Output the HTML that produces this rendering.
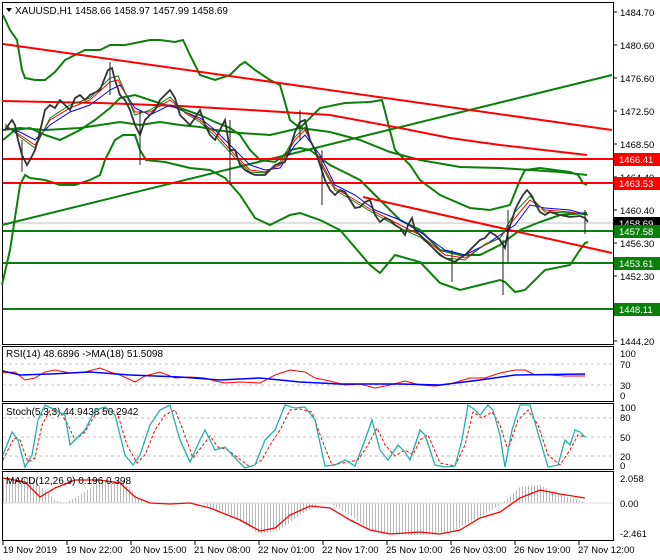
<!DOCTYPE html>
<html><head><meta charset="utf-8"><style>
html,body{margin:0;padding:0;background:#fff;}
svg{display:block;font-family:"Liberation Sans",sans-serif;}
</style></head><body>
<svg width="660" height="560" viewBox="0 0 660 560" xmlns="http://www.w3.org/2000/svg">
<defs>
<pattern id="hist" width="3" height="10" patternUnits="userSpaceOnUse"><rect x="0" y="0" width="1" height="10" fill="#b8b8b8"/></pattern>
</defs>
<rect width="660" height="560" fill="#fff"/>
<g fill="none" stroke="#000" stroke-width="1">
<rect x="2.5" y="2.5" width="611" height="342"/>
<rect x="2.5" y="346.5" width="611" height="55"/>
<rect x="2.5" y="403.5" width="611" height="66"/>
<rect x="2.5" y="471.5" width="611" height="69"/>
</g>
<g stroke="#000">
<line x1="613" y1="12" x2="617" y2="12"/><line x1="613" y1="45" x2="617" y2="45"/><line x1="613" y1="78" x2="617" y2="78"/><line x1="613" y1="111" x2="617" y2="111"/><line x1="613" y1="144" x2="617" y2="144"/><line x1="613" y1="177" x2="617" y2="177"/><line x1="613" y1="210" x2="617" y2="210"/><line x1="613" y1="243" x2="617" y2="243"/><line x1="613" y1="276" x2="617" y2="276"/><line x1="613" y1="341" x2="617" y2="341"/>
</g>
<g font-size="9.5" fill="#000">
<text x="620" y="16">1484.70</text><text x="620" y="49">1480.60</text><text x="620" y="82">1476.60</text><text x="620" y="115">1472.50</text><text x="620" y="148">1468.50</text><text x="620" y="181">1464.40</text><text x="620" y="214">1460.40</text><text x="620" y="247">1456.30</text><text x="620" y="280">1452.30</text><text x="620" y="345">1444.20</text>
</g>
<path d="M6 8 L12 8 L9 12 Z" fill="#000"/>
<text x="15" y="14" font-size="10">XAUUSD,H1  1458.66 1458.97 1457.99 1458.69</text>

<line x1="3" y1="223" x2="613" y2="223" stroke="#c0c0c0"/>

<g fill="none" stroke="#0a800a" stroke-width="2">
<polyline points="3,15 10,30 17,40 22,70 25,78 35,80 45,80 55,72 65,60 75,55 85,50 100,50 110,45 125,45 140,42 150,40 160,40 175,42 183,40 190,55 200,75 215,80 230,75 240,65 245,62 255,70 270,80 280,85 290,120 300,128 320,108 345,103 370,102 382,100 395,150 410,165 420,180 440,195 470,208 490,210 510,205 520,180 525,170 540,168 570,172 578,175 583,183 587,185"/>
<polyline points="3,130 20,128 45,130 80,128 120,122 140,125 160,122 180,125 200,127 215,130 240,133 270,135 300,128 330,132 360,140 390,152 420,160 460,167 500,168 530,170 560,172 587,175"/>
<polyline points="3,140 15,130 30,128 45,135 60,140 80,130 95,120 110,108 120,98 135,95 150,100 165,105 180,108 200,115 215,122 230,128 240,135 250,150 260,160 275,162 290,150 300,148 310,150 330,165 360,180 380,200 400,220 420,230 440,250 460,255 480,255 500,245 520,230 540,222 560,215 587,213"/>
<polyline points="2,285 10,250 20,185 25,175 30,178 45,180 60,185 75,185 90,180 100,175 105,160 115,140 123,135 135,135 140,150 146,160 165,162 190,168 210,170 225,178 240,195 255,218 270,225 290,215 300,213 320,220 340,230 370,265 380,273 395,255 420,262 440,283 460,290 480,285 500,280 505,282 515,292 525,290 545,270 570,265 580,250 585,243 588,242"/>
<polyline points="2,225 612,75"/>
<line x1="3" y1="231" x2="613" y2="231"/>
<line x1="3" y1="263" x2="613" y2="263"/>
<line x1="3" y1="309" x2="613" y2="309"/>
</g>
<g fill="none" stroke="#ff0000" stroke-width="2">
<line x1="3" y1="44" x2="612" y2="130"/>
<polyline points="2,101 100,103 180,106 250,110 330,115 400,128 450,138 500,145 587,155"/>
<line x1="363" y1="197" x2="612" y2="253"/>
<line x1="3" y1="159" x2="613" y2="159"/>
<line x1="3" y1="183" x2="613" y2="183"/>
</g>
<g fill="none" stroke-width="1">
<polyline stroke="#0000ff" points="5,128 20,132 35,140 50,125 70,112 90,105 110,90 120,85 135,108 150,115 170,105 185,112 200,118 215,130 235,150 250,165 265,170 280,168 295,145 305,135 320,155 335,185 355,195 375,210 400,220 420,232 445,250 465,255 485,245 500,235 515,225 530,205 545,208 570,210 588,215"/>
<polyline stroke="#ff0000" points="5,126 20,135 35,145 50,120 70,108 90,100 110,82 118,80 135,112 150,112 170,100 185,112 200,120 215,133 235,155 250,170 265,172 280,165 295,140 305,130 320,160 335,188 355,200 375,212 400,225 420,235 445,255 465,258 485,245 500,238 515,218 530,200 545,210 570,212 588,215"/>
<polyline stroke="#0a800a" points="5,124 20,137 35,148 50,118 70,105 90,98 110,78 118,76 135,115 150,110 170,97 185,113 200,122 215,136 235,158 250,172 265,173 280,162 295,137 305,127 320,163 335,190 355,202 375,214 400,228 420,237 445,258 465,260 485,244 500,238 515,212 530,196 545,212 570,213 588,215"/>
</g>
<polyline fill="none" stroke="#333" stroke-width="1.8" points="5,130 12,120 15,125 18,140 22,155 27,165 30,160 35,150 38,140 45,110 50,105 55,108 60,100 65,105 70,110 75,98 80,95 85,100 90,95 100,90 108,70 112,68 115,80 120,95 125,100 130,110 135,125 140,135 145,120 150,115 155,110 160,100 165,95 170,90 175,98 180,115 185,120 190,125 195,118 200,110 205,125 210,135 215,140 220,130 225,120 230,150 235,150 240,165 245,170 250,173 255,175 265,175 270,170 275,165 285,162 290,148 295,132 300,122 305,120 310,140 315,150 320,165 325,180 330,190 335,195 340,190 345,192 350,200 355,208 360,207 365,202 370,200 375,215 380,222 385,218 390,220 395,225 400,228 405,235 408,225 412,218 415,230 420,235 425,240 430,245 435,250 440,255 445,258 450,260 455,262 460,258 465,255 470,250 475,245 480,240 485,238 490,232 495,235 500,240 505,248 508,232 512,220 515,210 520,200 523,195 527,190 532,196 536,205 540,212 545,215 550,212 560,215 570,217 580,216 585,218 588,222"/>
<g stroke="#222" stroke-width="1">
<line x1="110" y1="62" x2="110" y2="95"/><line x1="22" y1="140" x2="22" y2="172"/><line x1="140" y1="110" x2="140" y2="165"/><line x1="230" y1="120" x2="230" y2="185"/><line x1="300" y1="110" x2="300" y2="140"/><line x1="322" y1="150" x2="322" y2="205"/><line x1="452" y1="250" x2="452" y2="282"/><line x1="503" y1="240" x2="503" y2="295"/><line x1="508" y1="210" x2="508" y2="262"/><line x1="585" y1="210" x2="585" y2="234"/>
</g>

<rect x="614" y="153" width="46" height="13" fill="#ff0000"/><text x="619" y="163" font-size="9.5" fill="#fff">1466.41</text>
<rect x="614" y="177" width="46" height="13" fill="#ff0000"/><text x="619" y="187" font-size="9.5" fill="#fff">1463.53</text>
<rect x="614" y="217" width="46" height="12" fill="#000"/><text x="619" y="227" font-size="9.5" fill="#fff">1458.69</text>
<rect x="614" y="225" width="46" height="13" fill="#0a800a"/><text x="619" y="235" font-size="9.5" fill="#fff">1457.58</text>
<rect x="614" y="257" width="46" height="13" fill="#0a800a"/><text x="619" y="267" font-size="9.5" fill="#fff">1453.61</text>
<rect x="614" y="303" width="46" height="13" fill="#0a800a"/><text x="619" y="313" font-size="9.5" fill="#fff">1448.11</text>

<g stroke="#c0c0c0" stroke-dasharray="3,3"><line x1="3" y1="364" x2="613" y2="364"/><line x1="3" y1="385" x2="613" y2="385"/></g>
<text x="6" y="357" font-size="10">RSI(14) 48.6896  -&gt;MA(18) 51.5098</text>
<g font-size="9.5"><text x="620" y="357">100</text><text x="620" y="368">70</text><text x="620" y="389">30</text><text x="620" y="399">0</text></g>
<polyline fill="none" stroke="#ff0000" points="3,373 15,372 25,380 35,378 45,372 55,370 70,373 85,372 100,368 110,372 120,375 135,382 145,376 160,372 175,378 190,377 205,378 215,381 225,383 240,382 260,383 275,375 290,370 305,372 315,378 330,381 345,385 360,384 375,388 390,385 405,381 420,385 435,386 450,384 470,378 485,378 500,373 515,370 525,370 535,375 550,375 565,376 585,376"/>
<polyline fill="none" stroke="#0000ff" stroke-width="1.5" points="3,371 20,375 50,374 90,372 130,375 180,377 220,380 260,378 300,382 340,384 400,384 440,385 480,380 515,375 585,374"/>

<g stroke="#c0c0c0" stroke-dasharray="3,3"><line x1="3" y1="418" x2="613" y2="418"/><line x1="3" y1="437" x2="613" y2="437"/><line x1="3" y1="456" x2="613" y2="456"/></g>
<text x="6" y="415" font-size="10">Stoch(5,3,3) 44.9438 50.2942</text>
<g font-size="9.5"><text x="620" y="411">100</text><text x="620" y="421">80</text><text x="620" y="441">50</text><text x="620" y="460">20</text><text x="620" y="469">0</text></g>
<polyline fill="none" stroke="#ff0000" stroke-dasharray="3,2" points="3,460 14,438 20,440 28,462 35,458 42,425 50,410 60,412 68,425 75,440 85,432 95,415 107,410 117,412 127,445 137,463 145,455 155,430 165,415 175,410 183,430 193,458 203,445 210,436 218,447 228,450 238,458 250,467 262,460 270,445 280,430 290,410 300,409 312,412 322,440 332,465 348,462 358,460 368,445 377,428 385,445 395,456 405,450 413,455 420,440 428,435 440,463 455,466 465,445 473,412 482,418 492,412 500,425 508,450 518,420 528,410 538,425 548,455 560,465 570,450 578,435 586,437"/>
<polyline fill="none" stroke="#20b2aa" stroke-width="1.3" points="3,455 12,432 18,440 25,467 32,455 38,420 45,405 55,410 65,415 70,445 75,440 85,430 95,410 105,407 115,415 125,455 133,465 140,455 150,425 160,410 170,405 180,440 190,462 200,440 205,430 215,450 225,447 235,458 245,468 255,465 265,440 275,430 285,405 295,408 305,407 315,420 325,466 335,465 345,460 355,466 365,440 372,420 380,450 388,460 398,445 405,452 410,460 415,445 420,430 425,435 435,465 445,467 455,466 462,440 468,405 475,410 480,415 488,405 493,410 500,435 505,467 512,430 520,405 530,405 540,440 548,467 558,465 565,440 570,445 575,430 580,432 585,437"/>

<polygon fill="url(#hist)" points="3,503 3,478 30,478 45,490 55,500 65,503 80,495 100,482 125,480 135,495 145,503 200,503 230,515 260,534 280,530 300,515 320,503 330,503 350,515 370,530 400,535 440,535 460,528 480,517 500,505 520,487 540,485 560,495 585,502 585,503"/>
<line x1="3" y1="503" x2="613" y2="503" stroke="#d8d8d8"/>
<polyline fill="none" stroke="#ff0000" stroke-width="1.3" points="3,478 25,482 40,497 55,488 75,480 100,480 120,483 135,497 150,503 170,504 190,503 210,508 240,520 260,531 275,528 290,515 310,506 330,508 350,520 370,530 390,534 420,532 440,534 460,530 480,518 500,512 520,498 540,490 560,494 585,498"/>
<text x="6" y="484" font-size="10">MACD(12,26,9) 0.196 0.398</text>
<g font-size="9.5"><text x="620" y="482">2.058</text><text x="620" y="507">0.00</text><text x="620" y="537">-2.461</text></g>

<g stroke="#000"><line x1="3" y1="541" x2="3" y2="545"/><line x1="67" y1="541" x2="67" y2="545"/><line x1="131" y1="541" x2="131" y2="545"/><line x1="195" y1="541" x2="195" y2="545"/><line x1="259" y1="541" x2="259" y2="545"/><line x1="323" y1="541" x2="323" y2="545"/><line x1="387" y1="541" x2="387" y2="545"/><line x1="451" y1="541" x2="451" y2="545"/><line x1="515" y1="541" x2="515" y2="545"/><line x1="579" y1="541" x2="579" y2="545"/></g>
<g font-size="9.5"><text x="3" y="553">19 Nov 2019</text><text x="66" y="553">19 Nov 22:00</text><text x="130" y="553">20 Nov 15:00</text><text x="194" y="553">21 Nov 08:00</text><text x="258" y="553">22 Nov 01:00</text><text x="322" y="553">22 Nov 17:00</text><text x="386" y="553">25 Nov 10:00</text><text x="450" y="553">26 Nov 03:00</text><text x="514" y="553">26 Nov 19:00</text><text x="578" y="553">27 Nov 12:00</text></g>
</svg>
</body></html>
